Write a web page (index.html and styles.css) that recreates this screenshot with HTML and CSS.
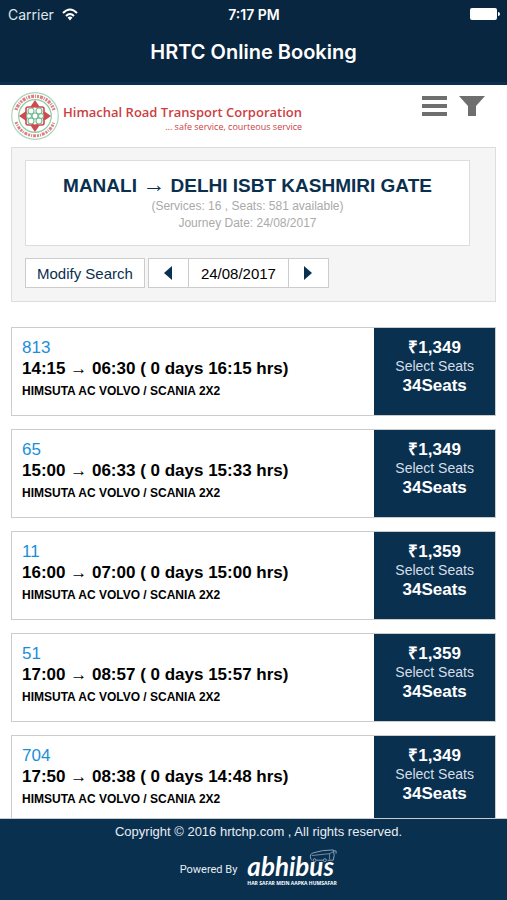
FILE: index.html
```html
<!DOCTYPE html>
<html lang="en">
<head>
    <meta charset="UTF-8">
    <meta name="viewport" content="width=device-width, initial-scale=1.0">
    <title>HRTC Online Booking</title>
    <link rel="stylesheet" href="styles.css">
</head>
<body>
    <header class="app-header">
        <div class="status-bar">
            <div class="carrier">
                <span>Carrier</span>
                <svg width="16" height="13" viewBox="0 0 16 13" fill="none" stroke="#fff" stroke-width="2">
                    <path d="M1 5 Q8 -2 15 5"/>
                    <path d="M4 8 Q8 4 12 8"/>
                    <path d="M5.5 9.5 Q8 7.5 10.5 9.5 L8 12.5 Z" fill="#fff" stroke="none"/>
                </svg>
            </div>
            <span class="clock">7:17 PM</span>
            <div class="battery">
                <svg width="30" height="13" viewBox="0 0 30 13" fill="#fff">
                    <rect x="0" y="0" width="27" height="12" rx="2"/>
                    <path d="M28 4 Q30 4 30 6 Q30 8 28 8 Z"/>
                </svg>
            </div>
        </div>
        <h1>HRTC Online Booking</h1>
    </header>

    <main class="content">
        <div class="brand-row">
            <svg class="emblem" width="48" height="50" viewBox="0 0 48 50" fill="none">
                <circle cx="24" cy="25" r="23.3" stroke="#a9d6bb" stroke-width="1.2"/>
                <circle cx="24" cy="25" r="16.3" stroke="#8ccaa5" stroke-width="1.2"/>
                <path d="M5 19 A20 20 0 0 1 43 19" stroke="#dc8286" stroke-width="3.4" stroke-dasharray="2 1 3 1 1 1"/>
                <path d="M5 31 A20 20 0 0 0 43 31" stroke="#dc8286" stroke-width="3" stroke-dasharray="2 1 1 1 3 1"/>
                <rect x="15" y="16" width="18" height="18" rx="2" stroke="#cf4a4f" stroke-width="1.6"/>
                <g fill="#cf4a4f">
                    <path d="M24 9 L28.5 15.5 L26 18 H22 L19.5 15.5 Z"/>
                    <path d="M24 41 L28.5 34.5 L26 32 H22 L19.5 34.5 Z"/>
                    <path d="M8 25 L14.5 20.5 L17 23 V27 L14.5 29.5 Z"/>
                    <path d="M40 25 L33.5 20.5 L31 23 V27 L33.5 29.5 Z"/>
                </g>
                <circle cx="24" cy="25" r="8.5" fill="#fff"/>
                <g stroke="#72bd91" stroke-width="1.1">
                    <circle cx="24" cy="25" r="3"/>
                    <circle cx="20" cy="20" r="3"/>
                    <circle cx="28" cy="20" r="3"/>
                    <circle cx="20" cy="30" r="3"/>
                    <circle cx="28" cy="30" r="3"/>
                    <circle cx="18" cy="25" r="2.5"/>
                    <circle cx="30" cy="25" r="2.5"/>
                </g>
            </svg>
            <div class="brand-text">
                <div class="brand-name">Himachal Road Transport Corporation</div>
                <div class="brand-tag">... safe service, courteous service</div>
            </div>
            <div class="tools">
                <button type="button" class="icon-btn" aria-label="Menu">
                    <svg width="25" height="20" viewBox="0 0 25 20" fill="#6e6e6e">
                        <path d="M0 0 H25 V4 H0 Z M0 8 H25 V12 H0 Z M0 16 H25 V20 H0 Z"/>
                    </svg>
                </button>
                <button type="button" class="icon-btn" aria-label="Filter">
                    <svg width="26" height="20" viewBox="0 0 26 20" fill="#6e6e6e">
                        <path d="M0 0 H26 L17 10 V20 H9 V10 Z"/>
                    </svg>
                </button>
            </div>
        </div>

        <section class="search-panel">
            <div class="journey">
                <h2>MANALI <span class="to">→</span> DELHI ISBT KASHMIRI GATE</h2>
                <p>(Services: 16 , Seats: 581 available)</p>
                <p>Journey Date: 24/08/2017</p>
            </div>
            <div class="search-actions">
                <button type="button" class="box-btn modify">Modify Search</button>
                <div class="date-nav">
                    <button type="button" class="box-btn arrow" aria-label="Previous day">
                        <svg width="8" height="14" viewBox="0 0 8 14" fill="#0a3050"><path d="M8 0 V14 L0 7 Z"/></svg>
                    </button>
                    <button type="button" class="box-btn date">24/08/2017</button>
                    <button type="button" class="box-btn arrow" aria-label="Next day">
                        <svg width="8" height="14" viewBox="0 0 8 14" fill="#0a3050"><path d="M0 0 V14 L8 7 Z"/></svg>
                    </button>
                </div>
            </div>
        </section>

        <section class="services">
            <article class="service">
                <div class="service-info">
                    <a href="#" class="service-no">813</a>
                    <div class="service-time">14:15 → 06:30 ( 0 days 16:15 hrs)</div>
                    <div class="service-type">HIMSUTA AC VOLVO / SCANIA 2X2</div>
                </div>
                <button type="button" class="select-seats">
                    <span class="fare">₹1,349</span>
                    <span class="select-label">Select Seats</span>
                    <span class="seats">34Seats</span>
                </button>
            </article>
            <article class="service">
                <div class="service-info">
                    <a href="#" class="service-no">65</a>
                    <div class="service-time">15:00 → 06:33 ( 0 days 15:33 hrs)</div>
                    <div class="service-type">HIMSUTA AC VOLVO / SCANIA 2X2</div>
                </div>
                <button type="button" class="select-seats">
                    <span class="fare">₹1,349</span>
                    <span class="select-label">Select Seats</span>
                    <span class="seats">34Seats</span>
                </button>
            </article>
            <article class="service">
                <div class="service-info">
                    <a href="#" class="service-no">11</a>
                    <div class="service-time">16:00 → 07:00 ( 0 days 15:00 hrs)</div>
                    <div class="service-type">HIMSUTA AC VOLVO / SCANIA 2X2</div>
                </div>
                <button type="button" class="select-seats">
                    <span class="fare">₹1,359</span>
                    <span class="select-label">Select Seats</span>
                    <span class="seats">34Seats</span>
                </button>
            </article>
            <article class="service">
                <div class="service-info">
                    <a href="#" class="service-no">51</a>
                    <div class="service-time">17:00 → 08:57 ( 0 days 15:57 hrs)</div>
                    <div class="service-type">HIMSUTA AC VOLVO / SCANIA 2X2</div>
                </div>
                <button type="button" class="select-seats">
                    <span class="fare">₹1,359</span>
                    <span class="select-label">Select Seats</span>
                    <span class="seats">34Seats</span>
                </button>
            </article>
            <article class="service">
                <div class="service-info">
                    <a href="#" class="service-no">704</a>
                    <div class="service-time">17:50 → 08:38 ( 0 days 14:48 hrs)</div>
                    <div class="service-type">HIMSUTA AC VOLVO / SCANIA 2X2</div>
                </div>
                <button type="button" class="select-seats">
                    <span class="fare">₹1,349</span>
                    <span class="select-label">Select Seats</span>
                    <span class="seats">34Seats</span>
                </button>
            </article>
        </section>
    </main>

    <footer class="app-footer">
        <p>Copyright © 2016 hrtchp.com , All rights reserved.</p>
        <div class="powered">
            <span class="powered-label">Powered By</span>
            <a href="#" class="abhibus">
                <span class="abhibus-name">abhibus</span>
                <span class="abhibus-tag">HAR SAFAR MEIN AAPKA HUMSAFAR</span>
                <svg class="abhibus-bus" width="28" height="14" viewBox="0 0 30 15" fill="none" stroke="#8fa8bd">
                    <path d="M2 11 Q0 5 5 4 Q14 1 26 1 Q28 7 26 12 L20 12 M15 12 L8 12 M3 12 L2 11"/>
                    <path d="M3 7 L22 5 L26 3 M22 5 L22 11" stroke-width="0.8"/>
                    <path d="M26 2 L29 2 L29 5"/>
                    <circle cx="6" cy="12" r="1.6"/>
                    <circle cx="17" cy="12" r="1.6"/>
                </svg>
            </a>
        </div>
    </footer>
</body>
</html>
```
FILE: styles.css
```css
* {
    box-sizing: border-box;
}
body {
    margin: 0;
    height: 100vh;
    display: flex;
    flex-direction: column;
    font-family: "Liberation Sans", Arial, sans-serif;
    background: #fff;
}
h1, h2, p {
    margin: 0;
}
button {
    font-family: inherit;
    cursor: pointer;
}
a {
    text-decoration: none;
}
svg {
    display: block;
}

/* header */
.app-header {
    flex-shrink: 0;
    background: #08263f;
    color: #fff;
    border-bottom: 3px solid #0a2f50;
    padding-bottom: 14px;
    font-family: Inter, sans-serif;
}
.status-bar {
    display: grid;
    grid-template-columns: 1fr auto 1fr;
    align-items: center;
    height: 28px;
    padding: 0 7px 0 8px;
    font-size: 14px;
}
.carrier {
    display: flex;
    align-items: center;
    gap: 8px;
    color: #dfe6ec;
}
.clock {
    font-weight: 600;
    font-size: 14px;
}
.battery {
    justify-self: end;
}
.app-header h1 {
    font-size: 20px;
    line-height: 24px;
    font-weight: 600;
    text-align: center;
    padding-top: 12px;
    height: 40px;
}

/* scrolling content */
.content {
    flex: 1;
    min-height: 0;
    overflow-y: auto;
    scrollbar-width: none;
    padding: 0 11px;
}
.brand-row {
    display: flex;
    align-items: flex-start;
    padding: 6px 0;
}
.brand-text {
    padding: 12px 0 0 4px;
    color: #cb3f45;
    font-family: "Open Sans", sans-serif;
    text-align: right;
}
.brand-name {
    font-size: 13px;
    line-height: 18px;
    font-weight: 600;
}
.brand-tag {
    font-size: 9px;
    line-height: 12px;
}
.tools {
    display: flex;
    gap: 12px;
    margin-left: auto;
    padding: 5px 11px 0 0;
}
.icon-btn {
    border: 0;
    padding: 0;
    background: none;
}

/* journey and date */
.search-panel {
    background: #f5f5f5;
    border: 1px solid #ddd;
    padding: 12px 25px 13px 13px;
}
.journey {
    background: #fff;
    border: 1px solid #ddd;
    padding: 12px 0 13px;
    text-align: center;
}
.journey h2 {
    color: #0a3050;
    font-size: 19px;
    line-height: 25px;
}
.journey .to {
    font-weight: normal;
    font-size: 23px;
    line-height: 1;
}
.journey p {
    color: #aaa;
    font-size: 12px;
    line-height: 17px;
}
.search-actions {
    display: flex;
    gap: 3px;
    margin-top: 12px;
}
.date-nav {
    display: flex;
}
.box-btn {
    display: flex;
    align-items: center;
    justify-content: center;
    height: 30px;
    padding: 0 11px;
    background: #fff;
    border: 1px solid #ccc;
    font-size: 15px;
    color: #0a3050;
}
.box-btn.arrow {
    width: 41px;
}
.box-btn.date {
    padding: 0 12px;
    color: #000;
    border-width: 1px 0;
}

/* service list */
.services {
    display: flex;
    flex-direction: column;
    gap: 13px;
    padding: 25px 0;
}
.service {
    display: flex;
    min-height: 89px;
    border: 1px solid #ccc;
}
.service-info {
    flex: 1;
    padding: 10px;
}
.service-no {
    display: block;
    color: #1a8fd8;
    font-size: 17px;
    line-height: 20px;
}
.service-time {
    font-size: 17px;
    line-height: 22px;
    font-weight: bold;
}
.service-type {
    font-size: 12px;
    line-height: 22px;
    font-weight: bold;
}
.select-seats {
    flex: 0 0 25%;
    display: flex;
    flex-direction: column;
    align-items: center;
    padding: 10px 0;
    border: 0;
    background: #0a3050;
    color: #fff;
}
.fare, .seats {
    font-size: 17px;
    line-height: 20px;
    font-weight: bold;
}
.select-label {
    font-size: 14px;
    line-height: 17px;
    color: #d5dee6;
}
.seats {
    line-height: 22px;
}

/* footer */
.app-footer {
    flex-shrink: 0;
    background: #0a3050;
    color: #e8edf2;
    border-top: 1px solid #ccc;
    padding: 4px 0 13px 10px;
    text-align: center;
    font-size: 13px;
    line-height: 17px;
}
.powered {
    display: flex;
    justify-content: center;
    align-items: center;
    gap: 10px;
    margin-top: 9px;
}
.powered-label {
    font-family: Roboto, sans-serif;
    font-size: 11px;
    padding-top: 2px;
}
.abhibus {
    position: relative;
    width: 90px;
    color: #fff;
    font-family: Lato, sans-serif;
    text-align: left;
}
.abhibus-name {
    display: block;
    font-size: 26px;
    line-height: 27px;
    padding-top: 4px;
    font-weight: bold;
    font-style: italic;
}
.abhibus-tag {
    display: block;
    font-family: "Open Sans", sans-serif;
    font-size: 5px;
    line-height: 7px;
    font-weight: bold;
}
.abhibus-bus {
    position: absolute;
    top: 0;
    right: 0;
}
```
